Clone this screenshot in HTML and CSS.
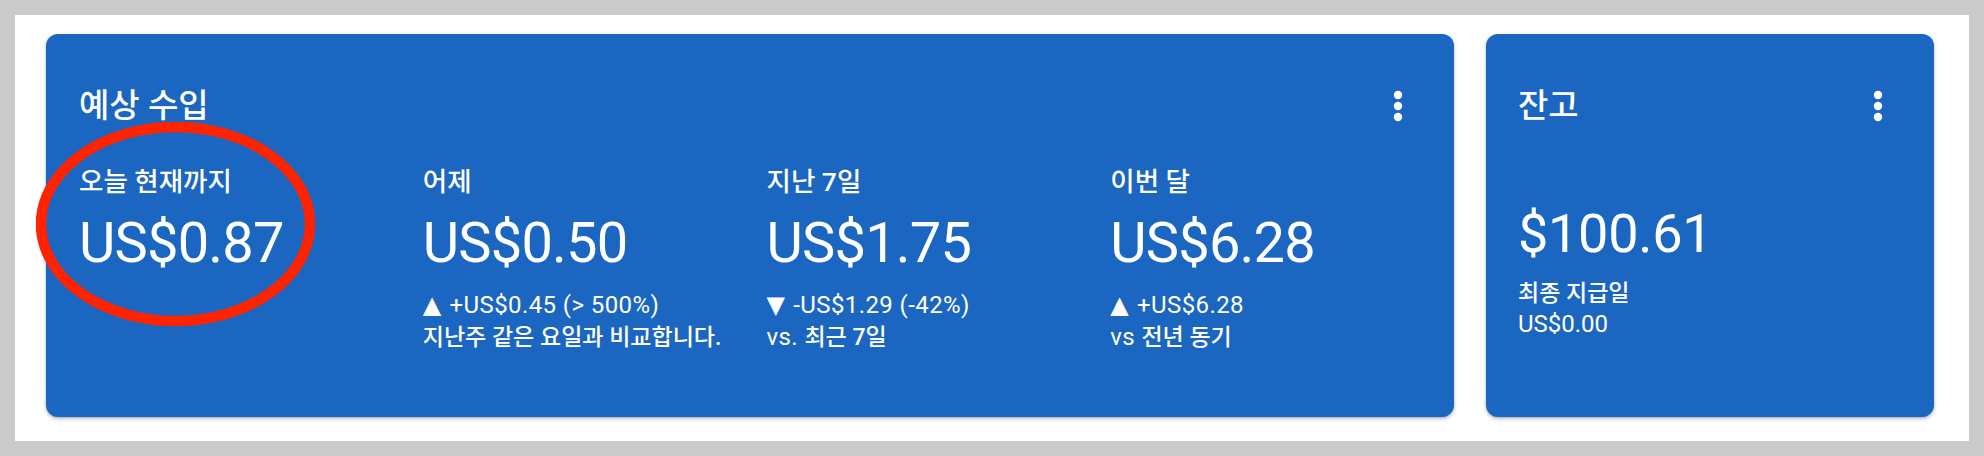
FILE: index.html
```html
<!DOCTYPE html>
<html lang="ko">
<head>
<meta charset="utf-8">
<title>예상 수입</title>
<link rel="stylesheet" href="styles.css">
</head>
<body>
<div class="panel">
  <section class="card card-earnings">
    <div class="card-header">
      <h2 class="card-title">예상 수입</h2>
      <button class="kebab" aria-label="더보기">
        <svg viewBox="0 0 24 24" width="44" height="44"><circle cx="12" cy="6" r="2.3"/><circle cx="12" cy="12" r="2.3"/><circle cx="12" cy="18" r="2.3"/></svg>
      </button>
    </div>
    <div class="metrics">
      <div class="metric">
        <div class="metric-label">오늘 현재까지</div>
        <div class="metric-value">US$0.87</div>
      </div>
      <div class="metric">
        <div class="metric-label">어제</div>
        <div class="metric-value">US$0.50</div>
        <div class="metric-change"><span class="tri">▲</span> +US$0.45 (&gt; 500%)<br><span class="ko">지난주 같은 요일과 비교합니다.</span></div>
      </div>
      <div class="metric">
        <div class="metric-label">지난 7일</div>
        <div class="metric-value">US$1.75</div>
        <div class="metric-change"><span class="tri">▼</span> -US$1.29 (-42%)<br>vs. <span class="ko">최근 7일</span></div>
      </div>
      <div class="metric">
        <div class="metric-label">이번 달</div>
        <div class="metric-value">US$6.28</div>
        <div class="metric-change"><span class="tri">▲</span> +US$6.28<br>vs <span class="ko">전년 동기</span></div>
      </div>
    </div>
    <svg class="highlight" viewBox="0 0 280 206" width="280" height="206" aria-hidden="true"><ellipse cx="139.5" cy="102" rx="134.5" ry="97" /></svg>
  </section>
  <section class="card card-balance">
    <div class="card-header">
      <h2 class="card-title">잔고</h2>
      <button class="kebab" aria-label="더보기">
        <svg viewBox="0 0 24 24" width="44" height="44"><circle cx="12" cy="6" r="2.3"/><circle cx="12" cy="12" r="2.3"/><circle cx="12" cy="18" r="2.3"/></svg>
      </button>
    </div>
    <div class="balance-value">$100.61</div>
    <div class="balance-sub"><span class="ko">최종 지급일</span><br>US$0.00</div>
  </section>
</div>
</body>
</html>
```

FILE: styles.css
```css
html, body {
  margin: 0;
  padding: 0;
}

body {
  background: #cbcbcb;
  padding: 15px;
  font-family: "Roboto", "Noto Sans CJK KR", sans-serif;
  color: #fff;
}

.panel {
  box-sizing: border-box;
  height: 426px;
  background: #fff;
  display: flex;
  gap: 32px;
  padding: 19px 35px 24px 31px;
}

.card {
  position: relative;
  box-sizing: border-box;
  background: #1a66c1;
  border-radius: 12px;
  box-shadow: 0 2px 4px rgba(0, 0, 0, 0.22), 0 1px 2px rgba(0, 0, 0, 0.12);
  padding: 50px 0 0 33px;
}

.card-earnings {
  flex: 1;
}

.card-balance {
  width: 448px;
  flex: none;
  padding-left: 32px;
}

.card-header {
  display: flex;
  align-items: center;
  justify-content: space-between;
  height: 44px;
  padding-right: 34px;
}

.card-title {
  margin: 0;
  font-size: 33px;
  font-weight: 500;
  line-height: 44px;
}

.kebab {
  width: 44px;
  height: 44px;
  padding: 0;
  border: 0;
  background: none;
  color: #fff;
  display: flex;
}

.kebab svg {
  fill: currentColor;
}

.metrics {
  display: grid;
  grid-template-columns: repeat(4, 1fr);
  margin-top: 38px;
}

.metric-label {
  font-size: 26.5px;
  font-weight: 500;
  line-height: 32px;
}

.metric-value {
  margin-top: 13px;
  font-size: 56px;
  line-height: 64px;
  letter-spacing: -0.8px;
}

.metric-change {
  margin-top: 14px;
  font-size: 24px;
  line-height: 32px;
  letter-spacing: 0.4px;
}

.ko {
  font-size: 23px;
  font-weight: 500;
  letter-spacing: 0;
}

.tri {
  font-family: "DejaVu Sans", sans-serif;
  font-size: 24px;
  line-height: 0;
  letter-spacing: 0;
  margin-right: 2px;
}

.balance-value {
  margin-top: 74px;
  font-size: 54px;
  line-height: 64px;
  letter-spacing: -0.3px;
}

.balance-sub {
  margin-top: 12px;
  font-size: 24px;
  line-height: 31px;
}

.highlight {
  position: absolute;
  left: -10px;
  top: 88px;
  fill: none;
  stroke: #fe2301;
  stroke-width: 10.5;
  pointer-events: none;
}
```
